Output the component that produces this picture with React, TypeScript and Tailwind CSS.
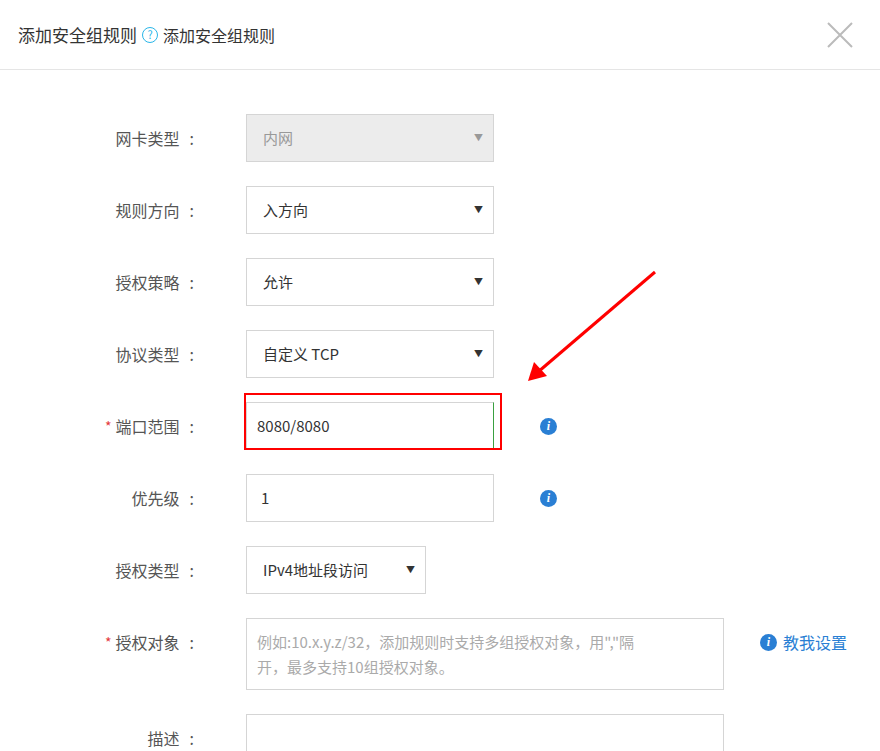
import React from "react";

const font = { fontFamily: '"Microsoft YaHei","Noto Sans CJK SC","Liberation Sans",sans-serif' };

function Label({ text, req }: { text: string; req?: boolean }) {
  return (
    <div className="w-[200px] h-[48px] flex items-center justify-end pr-[6px] text-[16px] text-[#555] shrink-0">
      {req && <span className="text-[#e4393c] mr-[4px] text-[14px]">*</span>}
      <span>{text}</span>
      <span className="ml-[10px]">:</span>
    </div>
  );
}

function Select({ value, w = "w-[248px]", disabled }: { value: string; w?: string; disabled?: boolean }) {
  return (
    <div className={`${w} h-[48px] border border-[#d5d5d5] flex items-center justify-between pl-[16px] pr-[10px] text-[15px] ${disabled ? "bg-[#ececec] text-[#999]" : "bg-white text-[#333]"}`}>
      <span>{value}</span>
      <span className={`text-[9px] ${disabled ? "text-[#999]" : "text-[#333]"}`}>▼</span>
    </div>
  );
}

function Info() {
  return (
    <div className="w-[17px] h-[17px] rounded-full bg-[#2a7fd4] flex items-center justify-center text-white text-[12px] italic font-bold" style={{ fontFamily: '"Liberation Serif",serif' }}>
      i
    </div>
  );
}

export default function App() {
  return (
    <div className="w-[880px] h-[751px] bg-white overflow-hidden relative" style={font}>
      <div className="h-[70px] border-b border-[#e5e5e5] flex items-center justify-between pl-[18px] pr-[26px]">
        <div className="flex items-center text-[17px] text-[#333]">
          <span>添加安全组规则</span>
          <span className="mx-[5px] w-[16px] h-[16px] rounded-full border-[1.5px] border-[#29b6e8] text-[#29b6e8] text-[11px] flex items-center justify-center">?</span>
          <span className="text-[16px]">添加安全组规则</span>
        </div>
        <svg width="28" height="28" viewBox="0 0 28 28" stroke="#bbb" strokeWidth="2"><path d="M2 2L26 26M26 2L2 26" /></svg>
      </div>
      <div className="pt-[44px] flex flex-col gap-[24px]">
        <div className="flex items-center"><Label text="网卡类型" /><div className="ml-[46px]"><Select value="内网" disabled /></div></div>
        <div className="flex items-center"><Label text="规则方向" /><div className="ml-[46px]"><Select value="入方向" /></div></div>
        <div className="flex items-center"><Label text="授权策略" /><div className="ml-[46px]"><Select value="允许" /></div></div>
        <div className="flex items-center"><Label text="协议类型" /><div className="ml-[46px]"><Select value="自定义 TCP" /></div></div>
        <div className="flex items-center">
          <Label text="端口范围" req />
          <div className="ml-[46px] relative">
            <div className="w-[248px] h-[48px] border border-[#d5d5d5] border-r-[#3aa040] border-b-[#3aa040] bg-white flex items-center pl-[10px] text-[15px] text-[#333]">8080/8080</div>
            <div className="absolute left-[-2px] top-[-9px] w-[258px] h-[57px] border-[2px] border-[#f00]"></div>
          </div>
          <div className="ml-[46px]"><Info /></div>
        </div>
        <div className="flex items-center">
          <Label text="优先级" />
          <div className="ml-[46px] w-[248px] h-[48px] border border-[#d5d5d5] bg-white flex items-center pl-[14px] text-[15px] text-[#333]">1</div>
          <div className="ml-[46px]"><Info /></div>
        </div>
        <div className="flex items-center"><Label text="授权类型" /><div className="ml-[46px]"><Select value="IPv4地址段访问" w="w-[180px]" /></div></div>
        <div className="flex items-start">
          <Label text="授权对象" req />
          <div className="ml-[46px] w-[478px] h-[72px] border border-[#d5d5d5] bg-white px-[10px] pt-[10px] text-[15px] leading-[25px] text-[#aaa] whitespace-nowrap">
            例如:10.x.y.z/32，添加规则时支持多组授权对象，用","隔<br />开，最多支持10组授权对象。
          </div>
          <div className="ml-[36px] h-[48px] flex items-center gap-[6px] text-[16px] text-[#2a7fd4]"><Info /><span>教我设置</span></div>
        </div>
        <div className="flex items-start">
          <Label text="描述" />
          <div className="ml-[46px] w-[478px] h-[72px] border border-[#d5d5d5] bg-white"></div>
        </div>
      </div>
      <svg className="absolute left-0 top-0" width="880" height="751">
        <line x1="655" y1="272" x2="538" y2="372" stroke="#f00" strokeWidth="3" />
        <polygon points="528,381 534,362 547,376" fill="#f00" />
      </svg>
    </div>
  );
}
